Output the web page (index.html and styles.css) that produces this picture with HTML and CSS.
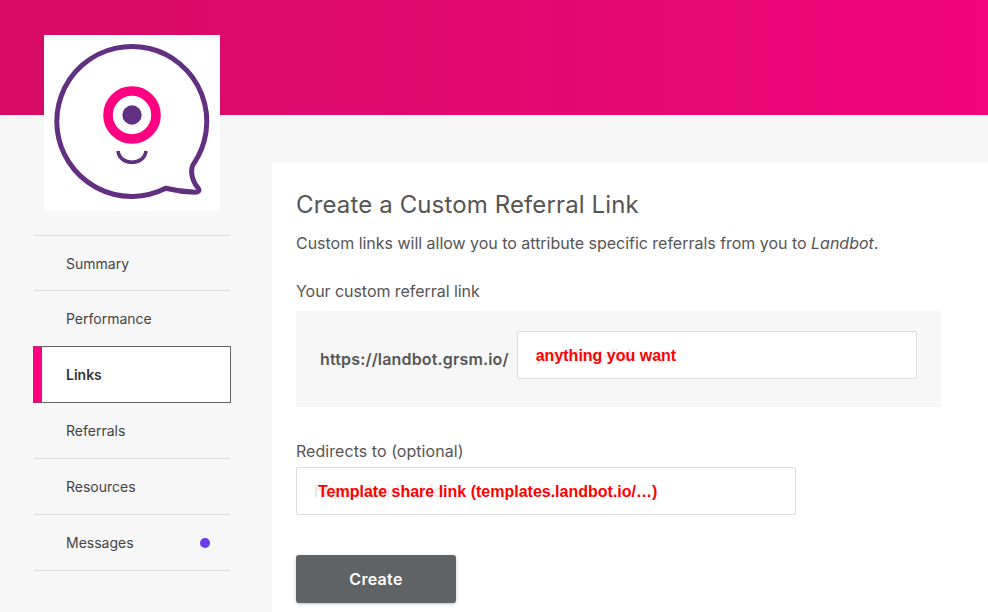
FILE: index.html
```html
<!DOCTYPE html>
<html lang="en">
<head>
<meta charset="utf-8">
<title>Create a Custom Referral Link</title>
<link rel="stylesheet" href="styles.css">
</head>
<body>
<header class="banner"></header>
<div class="layout">
  <aside class="sidebar">
    <div class="logo">
      <svg width="176" height="176" viewBox="-0.7 0 176 176" fill="none">
        <path d="M121 153.3A75 75 0 1 1 149.3 128.3C145.5 133 146 144 153 152.5C155.5 155.5 154 157.5 150.5 157.3C140 157 130 155.5 121 153.3Z" stroke="#613080" stroke-width="5" stroke-linejoin="round"/>
        <circle cx="87.3" cy="80" r="24" stroke="#ff0080" stroke-width="9.6"/>
        <circle cx="87.3" cy="80" r="9.7" fill="#613080"/>
        <path d="M73.3 116C75 131 99.5 131 101.3 116" stroke="#613080" stroke-width="3.6"/>
      </svg>
    </div>
    <nav class="nav">
      <a class="nav-item">Summary</a>
      <a class="nav-item">Performance</a>
      <a class="nav-item active">Links</a>
      <a class="nav-item">Referrals</a>
      <a class="nav-item">Resources</a>
      <a class="nav-item">Messages<span class="dot"></span></a>
    </nav>
  </aside>
  <main class="panel">
    <h1 class="title">Create a Custom Referral Link</h1>
    <p class="intro">Custom links will allow you to attribute specific referrals from you to <em>Landbot</em>.</p>
    <div class="label">Your custom referral link</div>
    <div class="link-box">
      <span class="domain">https://landbot.grsm.io/</span>
      <div class="input input-slug"><span class="ghost">your-text-link</span><span class="note note-slug">anything you want</span></div>
    </div>
    <div class="label label-redirect">Redirects to (optional)</div>
    <div class="input input-redirect"><span class="ghost">https://landbot.io</span><span class="note note-redirect">Template share link (templates.landbot.io/…)</span></div>
    <button class="create">Create</button>
  </main>
</div>
</body>
</html>
```
FILE: styles.css
```css
* { box-sizing: border-box; }
html, body { margin: 0; height: 612px; overflow: hidden; }
body { background: #f7f7f7; font-family: Inter, "Liberation Sans", sans-serif; color: #555; }
.banner { height: 115px; background: linear-gradient(90deg, #d60b66 0%, #f0057a 100%); }
.layout { display: flex; align-items: flex-start; }
.sidebar { width: 272px; flex: none; padding-left: 34px; }
.logo { width: 176px; height: 176px; margin: -80px 0 24px 10px; background: #fff; position: relative; }
.logo svg { display: block; }
.nav { width: 196px; border-top: 1px solid #dcdcdc; display: flex; flex-direction: column; }
.nav-item { height: 56px; display: flex; align-items: center; justify-content: space-between; padding: 0 20px 0 32px; font-size: 14px; color: #444; border-bottom: 1px solid #dcdcdc; }
.nav-item:first-child { height: 55px; padding-top: 1px; }
.nav-item.active { height: 57px; width: 198px; margin: -1px 0 0 -1px; background: #fff; border: 1px solid #616366; border-left: 9px solid #ff0080; padding-left: 24px; font-weight: 600; color: #333; position: relative; }
.dot { width: 10px; height: 10px; border-radius: 50%; background: #6a3ceb; }
.panel { flex: 1; height: 449px; margin-top: 48px; padding: 26px 47px 0 24px; background: #fff; }
.title { margin: 0; font-size: 24px; line-height: 32px; font-weight: 400; letter-spacing: .13px; color: #555; }
.intro { margin: 10px 0 0; font-size: 16px; letter-spacing: -.02px; line-height: 24px; }
.label { margin-top: 24px; font-size: 16px; letter-spacing: -.05px; line-height: 24px; }
.link-box { margin-top: 8px; height: 96px; padding: 20px 24px 28px; background: #f7f7f7; display: flex; align-items: center; gap: 8px; }
.domain { padding-top: 8px; font-size: 16px; letter-spacing: .16px; font-weight: 600; white-space: nowrap; }
.input { height: 48px; background: #fff; border: 1px solid #dcdcdc; border-radius: 2px; position: relative; display: flex; align-items: center; padding-left: 17px; font-size: 16px; }
.input-slug { flex: 1; }
.input-redirect { width: 500px; margin-top: 4px; }
.ghost { color: #e2e2e2; }
.note { position: absolute; top: 14px; font-family: "Liberation Sans", Arial, sans-serif; font-weight: 700; font-size: 16px; line-height: 20px; color: #f00; white-space: nowrap; }
.note-slug { left: 18px; }
.note-redirect { left: 21px; }
.label-redirect { margin-top: 32px; letter-spacing: .05px; }
.create { display: block; width: 160px; height: 48px; margin-top: 40px; border: 0; border-radius: 3px; background: #606366; color: #fff; font: 600 16px Inter, sans-serif; letter-spacing: .3px; box-shadow: 0 1px 3px rgba(0,0,0,.25); }
```
